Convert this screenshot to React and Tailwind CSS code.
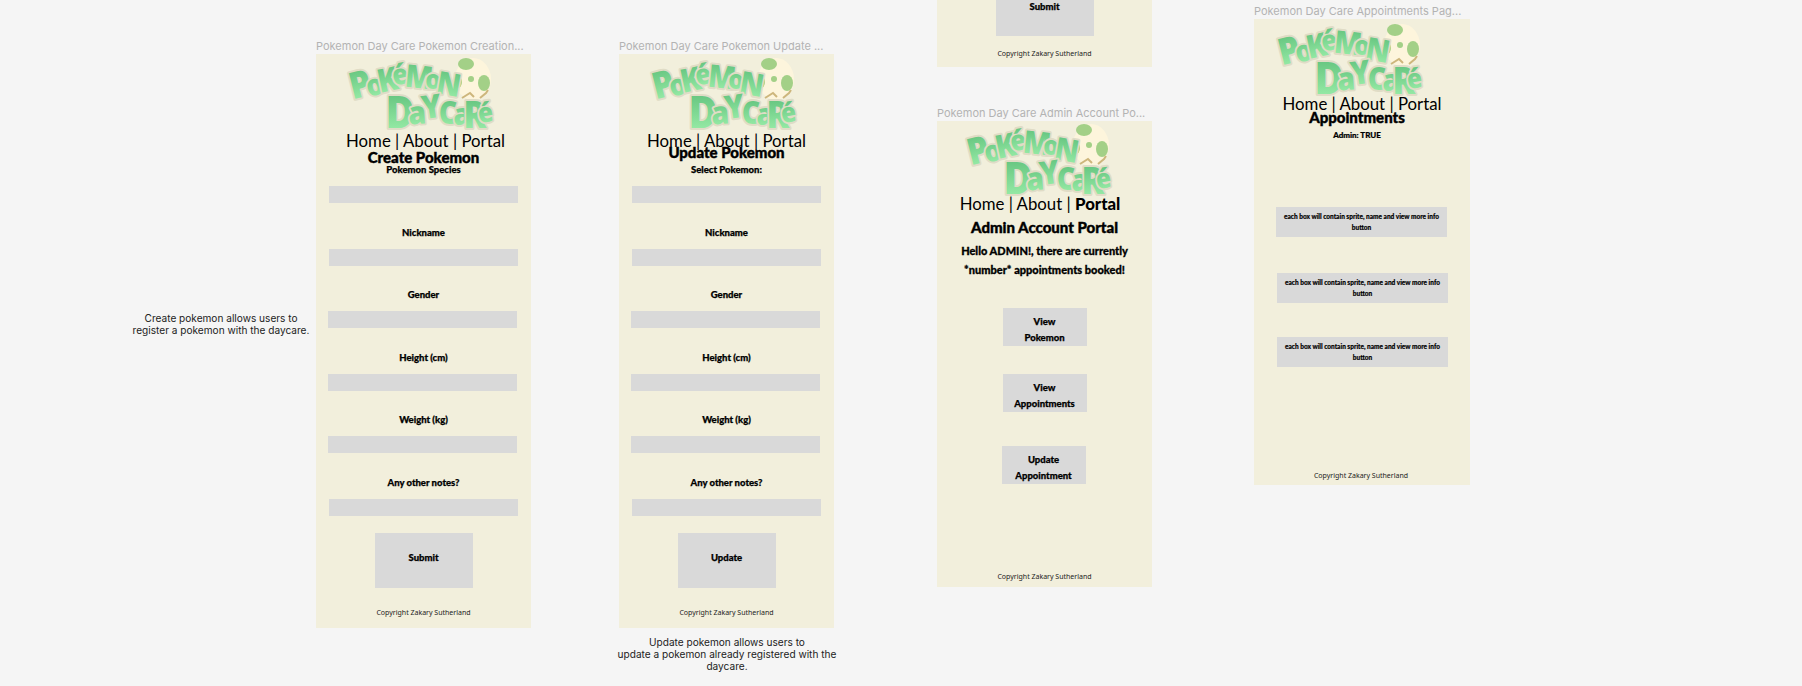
import React from "react";

const top = [
  ["P", 19, 40, 33, -14],
  ["o", 33, 38, 26, -14],
  ["K", 46, 34, 29, -12],
  ["é", 58, 27, 25, -12],
  ["M", 74, 31, 28, 6],
  ["o", 89, 32, 24, 0],
  ["N", 103, 38, 28, 10],
];
const bottom = [
  ["D", 56, 71, 39, 0],
  ["a", 74, 67, 28, -4],
  ["Y", 89, 61, 29, -8],
  ["C", 104, 67, 28, 0],
  ["a", 118, 68, 27, 0],
  ["R", 131, 71, 33, 0],
  ["é", 143, 65, 24, -10],
];

function Logo({ id }) {
  const grad = `logo-grad-${id}`;
  const letter = ([c, x, y, s, r], i) => (
    <text
      key={c + i}
      fontSize={s}
      fontFamily="'Open Sans', sans-serif"
      fontWeight="800"
      textAnchor="middle"
      fill={`url(#${grad})`}
      stroke="#e0dcc6"
      strokeWidth="3.5"
      strokeLinejoin="round"
      paintOrder="stroke"
      transform={`translate(${x} ${y}) rotate(${r}) scale(1.02 1.12)`}
    >
      {c}
    </text>
  );
  return (
    <svg width="150" height="78" viewBox="0 0 150 78" className="block overflow-visible">
      <defs>
        <linearGradient id={grad} x1="0" y1="0" x2="0" y2="1">
          <stop offset="0" stopColor="#55b873" />
          <stop offset="1" stopColor="#a4f5b0" />
        </linearGradient>
      </defs>
      <ellipse cx="129" cy="22" rx="18" ry="21" fill="#fdf5dc" />
      <ellipse cx="122" cy="7" rx="8" ry="6" fill="#a3d087" />
      <ellipse cx="140" cy="26" rx="6" ry="8" fill="#a3d087" />
      <circle cx="127" cy="22" r="3" fill="#a3d087" />
      <ellipse cx="114" cy="25" rx="4" ry="6" fill="#a3d087" />
      <path d="M118 41l8-5 4 4M136 41l6-5 2-3" fill="none" stroke="#cdb67c" strokeWidth="2" />
      {top.map(letter)}
      {bottom.map(letter)}
    </svg>
  );
}

function Nav({ bold, className }) {
  return (
    <div className={`h-5 shrink-0 text-[16.8px] leading-5 font-normal whitespace-nowrap text-black text-center font-['Lato',sans-serif] ${className}`}>
      Home | About | {bold ? <span className="font-black">Portal</span> : "Portal"}
    </div>
  );
}

function Field({ label, shift }) {
  return (
    <div className="flex flex-col gap-[10px] h-[62.5px]">
      <div className="h-3 text-[9.5px] leading-3 font-black text-black text-center font-['Lato',sans-serif] [-webkit-text-stroke:0.25px_black]">{label}</div>
      <div className={`h-[17px] w-[189px] bg-[#d9d9d9] ${shift}`} />
    </div>
  );
}

function Copyright({ className }) {
  return (
    <div className={`h-3 shrink-0 text-[7px] leading-3 text-[#222] text-center whitespace-nowrap font-['Noto_Sans',sans-serif] ${className}`}>
      Copyright Zakary Sutherland
    </div>
  );
}

function Caption({ className, children }) {
  return (
    <div className={`absolute text-[11px] leading-[14px] text-[#b3b3b3] whitespace-nowrap font-['Inter',sans-serif] ${className}`}>{children}</div>
  );
}

function FormFrame({ id, className, heading, headingClass, labels, shifts, action, navClass }) {
  return (
    <div className={`absolute top-[54px] w-[215px] h-[574px] flex flex-col bg-[#f2efdc] ${className}`}>
      <div className="pt-[3px] pl-[28px] h-[77px] shrink-0">
        <Logo id={id} />
      </div>
      <Nav className={navClass} />
      <div className={`h-4 text-[15px] leading-4 font-black text-black text-center whitespace-nowrap font-['Lato',sans-serif] [-webkit-text-stroke:0.4px_black] ${headingClass}`}>{heading}</div>
      <div className="flex flex-col mt-[-1px]">
        {labels.map((l, i) => (
          <Field key={l} label={l} shift={shifts[i]} />
        ))}
      </div>
      <div className="self-center mt-[-6px] w-[98px] h-[55px] shrink-0 flex justify-center pt-[19px] bg-[#d9d9d9] text-[9.5px] leading-3 font-black text-black font-['Lato',sans-serif] [-webkit-text-stroke:0.25px_black]">
        {action}
      </div>
      <Copyright className="mt-[19px]" />
    </div>
  );
}

function AdminButton({ a, b, className }) {
  return (
    <div className={`w-[84px] h-[38px] shrink-0 flex flex-col items-center pt-[6px] bg-[#d9d9d9] text-[9.5px] leading-4 font-black text-black font-['Lato',sans-serif] [-webkit-text-stroke:0.25px_black] ${className}`}>
      <div>{a}</div>
      <div>{b}</div>
    </div>
  );
}

function Box({ className }) {
  return (
    <div className={`w-[171px] h-[30px] shrink-0 flex flex-col items-center pt-[4px] bg-[#d9d9d9] text-[6.5px] leading-[11px] font-black text-black font-['Lato',sans-serif] [-webkit-text-stroke:0.15px_black] ${className}`}>
      <div className="whitespace-nowrap">each box will contain sprite, name and view more info</div>
      <div>button</div>
    </div>
  );
}

export default function App() {
  const labels1 = ["Pokemon Species", "Nickname", "Gender", "Height (cm)", "Weight (kg)", "Any other notes?"];
  const labels2 = ["Select Pokemon:", "Nickname", "Gender", "Height (cm)", "Weight (kg)", "Any other notes?"];
  const shifts = ["ml-[13px]", "ml-[13px]", "ml-[12px]", "ml-[12px]", "ml-[12px]", "ml-[13px]"];
  return (
    <div className="relative w-[1802px] h-[686px] overflow-hidden bg-[#f5f5f5]">
      <Caption className="left-[316px] top-[39px]">Pokemon Day Care Pokemon Creation...</Caption>
      <Caption className="left-[619px] top-[39px]">Pokemon Day Care Pokemon Update ...</Caption>
      <Caption className="left-[937px] top-[106px]">Pokemon Day Care Admin Account Po...</Caption>
      <Caption className="left-[1254px] top-[4px]">Pokemon Day Care Appointments Pag...</Caption>

      <div className="absolute left-[121px] top-[312px] w-[200px] text-center text-[10.1px] leading-3 text-[#222] whitespace-nowrap font-['Inter',sans-serif]">
        <div>Create pokemon allows users to</div>
        <div>register a pokemon with the daycare.</div>
      </div>
      <div className="absolute left-[607px] top-[636px] w-[240px] text-center text-[10.1px] leading-3 text-[#222] whitespace-nowrap font-['Inter',sans-serif]">
        <div>Update pokemon allows users to</div>
        <div>update a pokemon already registered with the</div>
        <div>daycare.</div>
      </div>

      <FormFrame
        id="a"
        className="left-[316px]"
        heading="Create Pokemon"
        headingClass="mt-[-2px]"
        labels={labels1}
        shifts={shifts}
        action="Submit"
        navClass="ml-[4px]"
      />
      <FormFrame
        id="b"
        className="left-[619px]"
        heading="Update Pokemon"
        headingClass="mt-[-7px] mb-[5px]"
        labels={labels2}
        shifts={shifts}
        action="Update"
        navClass=""
      />

      <div className="absolute left-[937px] top-0 w-[215px] h-[67px] flex flex-col items-center gap-[12px] bg-[#f2efdc]">
        <div className="w-[98px] h-[36px] flex justify-center pt-[1px] bg-[#d9d9d9] text-[9.5px] leading-3 font-black text-black font-['Lato',sans-serif] [-webkit-text-stroke:0.25px_black]">
          Submit
        </div>
        <Copyright />
      </div>

      <div className="absolute left-[937px] top-[121px] w-[215px] h-[466px] flex flex-col bg-[#f2efdc]">
        <div className="pt-[2px] pl-[25px] h-[73px] shrink-0">
          <Logo id="c" />
        </div>
        <Nav bold className="mr-[9px]" />
        <div className="mt-[3px] h-5 text-[15px] leading-5 font-black text-black text-center whitespace-nowrap font-['Lato',sans-serif] [-webkit-text-stroke:0.4px_black]">
          Admin Account Portal
        </div>
        <div className="mt-[4px] text-[11px] leading-[19px] font-black text-black text-center whitespace-nowrap font-['Lato',sans-serif] [-webkit-text-stroke:0.3px_black]">
          <div>Hello ADMIN!, there are currently</div>
          <div>*number* appointments booked!</div>
        </div>
        <AdminButton a="View" b="Pokemon" className="self-center mt-[29px]" />
        <AdminButton a="View" b="Appointments" className="self-center mt-[28px]" />
        <AdminButton a="Update" b="Appointment" className="self-center mt-[34px] mr-[2px]" />
        <Copyright className="mt-[87px]" />
      </div>

      <div className="absolute left-[1254px] top-[19px] w-[216px] h-[466px] flex flex-col bg-[#f2efdc]">
        <div className="pt-[4px] pl-[19px] h-[75px] shrink-0">
          <Logo id="d" />
        </div>
        <Nav />
        <div className="mt-[-7px] ml-[-10px] h-5 text-[15px] leading-5 font-black text-black text-center whitespace-nowrap font-['Lato',sans-serif] [-webkit-text-stroke:0.4px_black]">
          Appointments
        </div>
        <div className="mt-[2px] ml-[-10px] h-3 text-[8px] leading-3 font-black text-black text-center font-['Lato',sans-serif] [-webkit-text-stroke:0.2px_black]">
          Admin: TRUE
        </div>
        <Box className="ml-[22px] mt-[66px]" />
        <Box className="ml-[23px] mt-[36px]" />
        <Box className="ml-[23px] mt-[34px]" />
        <Copyright className="mt-[103px] mr-[2px]" />
      </div>
    </div>
  );
}
